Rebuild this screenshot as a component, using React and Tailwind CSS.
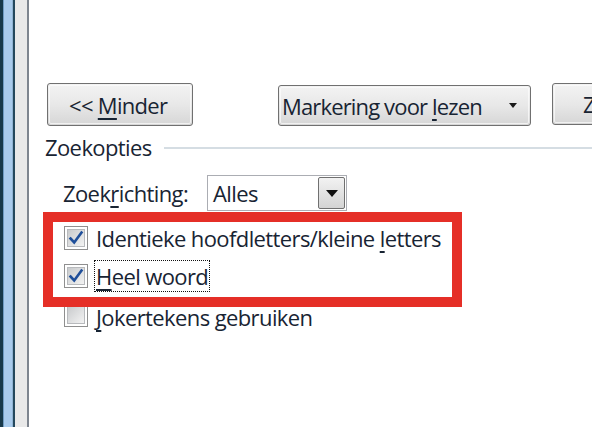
import React from "react";

const font = { fontFamily: '"Open Sans", "Noto Sans", sans-serif' };

function U({ children }) {
  return <span className="underline decoration-[1.5px] underline-offset-[4px]">{children}</span>;
}

function Check({ checked }) {
  return (
    <div className="w-[24px] h-[24px] shrink-0 border border-[#8f8f8f] bg-white p-[2px]">
      <div className="w-full h-full bg-gradient-to-br from-[#c9cbcd] to-[#f3f3f3] border border-[#b8babd] flex items-center justify-center">
        {checked && (
          <svg width="16" height="16" viewBox="0 0 16 16">
            <path d="M2.5 8.5 L6.2 12.5 L13.5 2.5" fill="none" stroke="#1f4f9a" strokeWidth="2.6" strokeLinejoin="miter" strokeLinecap="square" />
          </svg>
        )}
      </div>
    </div>
  );
}

function WinButton({ className, children }) {
  return (
    <div
      className={
        "shrink-0 rounded-[3px] border border-[#707070] bg-gradient-to-b from-[#f3f3f3] via-[#e8e8e8] to-[#d6d6d6] p-[1px] " +
        className
      }
    >
      <div className="w-full h-full rounded-[2px] border border-[#fcfcfc]/70 flex items-center">{children}</div>
    </div>
  );
}

export default function App() {
  return (
    <div className="w-[592px] h-[427px] flex bg-white overflow-hidden text-[#182433] text-[22px] leading-[30px]" style={font}>
      {/* window frame */}
      <div className="flex h-full shrink-0">
        <div className="w-[3px] bg-[#17394a]" />
        <div className="w-[1px] bg-[#6f9bc2]" />
        <div className="w-[8px] bg-[#a9cbec]" />
        <div className="w-[1px] bg-[#8fb3d3]" />
        <div className="w-[2px] bg-[#24485c]" />
        <div className="w-[12px] bg-[#e9e9e9]" />
        <div className="w-[2px] bg-[#7e858f]" />
      </div>

      <div className="relative flex-1 flex flex-col overflow-hidden">
        {/* button row */}
        <div className="flex items-start mt-[83px] ml-[18px]">
          <WinButton className="w-[146px] h-[43px]">
            <span className="pl-[19px] tracking-[-0.7px]">
              &lt;&lt; <U>M</U>inder
            </span>
          </WinButton>
          <WinButton className="ml-[85px] mt-[2px] w-[253px] h-[41px]">
            <span className="pl-[1px] tracking-[-0.85px]">
              Markering voor <U>l</U>ezen
            </span>
            <svg className="ml-auto mr-[10px]" width="10" height="6" viewBox="0 0 10 6">
              <path d="M1 0 L9 0 L5 5 Z" fill="#1a1a1a" />
            </svg>
          </WinButton>
          <WinButton className="ml-[21px] w-[80px] h-[42px]">
            <span className="pl-[28px]">Z</span>
          </WinButton>
        </div>

        {/* group header */}
        <div className="flex items-center ml-[16px] mt-[6px] h-[30px]">
          <span className="tracking-[-0.6px]">Zoekopties</span>
          <div className="flex-1 ml-[12px] h-[2px] bg-[#d5dde3] mt-[2px]" />
        </div>

        {/* direction row */}
        <div className="flex items-center ml-[34px] mt-[13px] h-[36px]">
          <span className="w-[144px] tracking-[-0.6px]">
            Zoek<U>r</U>ichting:
          </span>
          <div className="w-[140px] h-[36px] border border-[#abadb3] bg-white flex items-center">
            <span className="pl-[5px] tracking-[-0.6px]">Alles</span>
            <div className="ml-auto mr-[1px] w-[27px] h-[32px] border border-[#707070] rounded-[2px] bg-gradient-to-b from-[#f2f2f2] to-[#d4d4d4] flex items-center justify-center">
              <svg width="12" height="7" viewBox="0 0 12 7">
                <path d="M0 0 L12 0 L6 7 Z" fill="#111" />
              </svg>
            </div>
          </div>
        </div>

        {/* checkboxes */}
        <div className="flex flex-col ml-[35px] mt-[15px] gap-[14px]">
          <div className="flex items-center gap-[8px] h-[24px]">
            <Check checked />
            <span className="tracking-[-0.6px]">
              Identieke hoofdletters/kleine <U>l</U>etters
            </span>
          </div>
          <div className="flex items-center gap-[6px] h-[24px]">
            <Check checked />
            <span className="border border-dotted border-[#111] px-[1px] leading-[30px] tracking-[-0.6px]">
              <U>H</U>eel woord
            </span>
          </div>
          <div className="flex items-center gap-[8px] h-[24px] mt-[1px]">
            <Check />
            <span className="tracking-[-0.6px] mt-[4px]">
              <U>J</U>okertekens gebruiken
            </span>
          </div>
        </div>

        {/* annotation */}
        <div className="absolute left-[14px] top-[212px] w-[419px] h-[95px] border-[10px] border-[#e52f27]" />
      </div>
    </div>
  );
}
